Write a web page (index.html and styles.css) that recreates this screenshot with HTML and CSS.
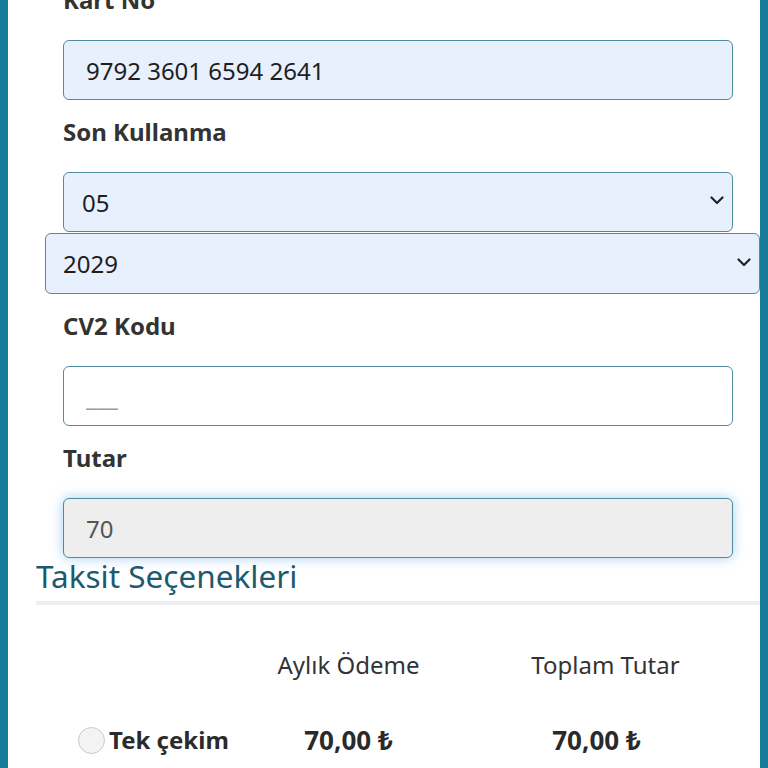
FILE: index.html
```html
<!DOCTYPE html>
<html lang="tr">
<head>
<meta charset="utf-8">
<title>Ödeme</title>
<link rel="stylesheet" href="styles.css">
</head>
<body>
<div class="page">
  <div class="form">
    <label class="label" for="kart">Kart No</label>
    <input class="field autofill" id="kart" type="text" value="9792 3601 6594 2641">

    <label class="label" for="ay">Son Kullanma</label>
    <div class="select-wrap">
      <select class="field autofill select" id="ay"><option>05</option></select>
      <svg class="chev" width="14" height="9" viewBox="0 0 14 9"><path d="M1.5 1.5 L7 7 L12.5 1.5" fill="none" stroke="#222" stroke-width="2.2" stroke-linecap="round" stroke-linejoin="round"/></svg>
    </div>
  </div>

  <div class="select-wrap wide">
    <select class="field autofill select select-wide"><option>2029</option></select>
    <svg class="chev" width="14" height="9" viewBox="0 0 14 9"><path d="M1.5 1.5 L7 7 L12.5 1.5" fill="none" stroke="#222" stroke-width="2.2" stroke-linecap="round" stroke-linejoin="round"/></svg>
  </div>

  <div class="form">
    <label class="label" for="cv2">CV2 Kodu</label>
    <input class="field" id="cv2" type="text" placeholder="___">

    <label class="label" for="tutar">Tutar</label>
    <input class="field readonly" id="tutar" type="text" value="70" readonly>
  </div>

  <h2 class="heading">Taksit Seçenekleri</h2>
  <div class="rule"></div>

  <div class="table">
    <div class="cell"></div>
    <div class="cell head">Aylık Ödeme</div>
    <div class="cell head">Toplam Tutar</div>

    <div class="cell option"><span class="radio"></span>Tek çekim</div>
    <div class="cell value v1">70,00 ₺</div>
    <div class="cell value v2">70,00 ₺</div>
  </div>
</div>
</body>
</html>
```
FILE: styles.css
```css
* { box-sizing: border-box; }
html, body { margin: 0; padding: 0; }
body {
  background: #177a99;
  font-family: "Noto Sans", "Open Sans", sans-serif;
  color: #333;
  overflow: hidden;
}
.page {
  margin: 0 8px;
  background: #fff;
  min-height: 800px;
  padding-left: 28px;
  margin-top: -15px;
}
.form {
  padding: 0 27px;
  display: flex;
  flex-direction: column;
}
.label {
  display: block;
  font-size: 24px;
  font-weight: 700;
  line-height: 30px;
  color: #333;
  margin: 0 0 25px;
}
.field {
  display: block;
  width: 100%;
  height: 60px;
  border: 1px solid #4f8ca0;
  border-radius: 6px;
  background: #fff;
  font-family: inherit;
  font-size: 24px;
  color: #1e1e1e;
  padding: 0 22px;
  margin: 0 0 17px;
  outline: none;
}
.autofill { background: #e8f0fe; }
.field::placeholder { color: #9a9a9a; }
.readonly {
  background: #eeeeee;
  color: #555;
  box-shadow: 0 0 12px rgba(102, 175, 233, 0.6);
  margin-bottom: 0;
}
.select-wrap { position: relative; }
.select {
  appearance: none;
  -webkit-appearance: none;
  padding-left: 18px;
  margin-bottom: 1px;
}
.chev {
  position: absolute;
  right: 9px;
  top: 24px;
}
.wide {
  margin-left: 9px;
}
.select-wide {
  height: 61px;
  padding-left: 17px;
  margin-bottom: 17px;
}
.wide .chev { right: 9px; top: 25px; }
.heading {
  margin: 0;
  font-size: 31.5px;
  font-weight: 400;
  line-height: 36px;
  color: #1d5a70;
}
.rule {
  height: 4px;
  background: #eceeef;
  margin-top: 7px;
}
.table {
  display: grid;
  grid-template-columns: 184px 257px 257px;
  grid-template-rows: 75px 75px;
  align-items: end;
  color: #333;
}
.cell { font-size: 24px; line-height: 30px; white-space: nowrap; }
.head { text-align: center; }
.option {
  font-weight: 700;
  display: flex;
  align-items: center;
  padding-left: 42px;
  color: #2a2a2a;
  font-size: 24px;
}
.radio {
  width: 27px;
  height: 27px;
  border-radius: 50%;
  border: 1px solid #c9c9c9;
  background: #f3f3f3;
  margin-right: 4px;
  flex: none;
}
.value { font-weight: 700; text-align: center; color: #2a2a2a; font-size: 26px; }
.v2 { padding-right: 18px; }
```
